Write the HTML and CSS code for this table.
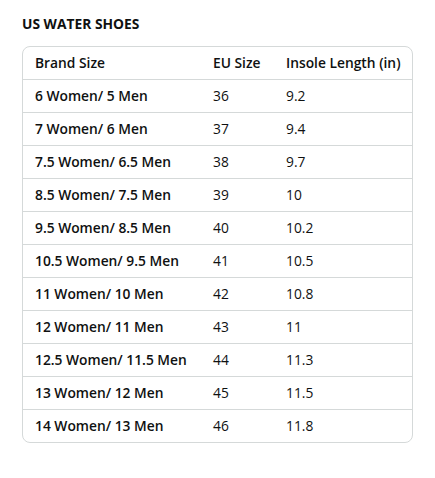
FILE: index.html
```html
<!DOCTYPE html>
<html>
<head>
<meta charset="utf-8">
<link rel="stylesheet" href="styles.css">
</head>
<body>
<div class="wrap">
  <h2 class="title">US WATER SHOES</h2>
  <div class="card">
    <table class="chart">
      <thead>
        <tr><th class="c1">Brand Size</th><th class="c2">EU Size</th><th class="c3">Insole Length (in)</th></tr>
      </thead>
      <tbody>
        <tr><th>6 Women/ 5 Men</th><td>36</td><td>9.2</td></tr>
        <tr><th>7 Women/ 6 Men</th><td>37</td><td>9.4</td></tr>
        <tr><th>7.5 Women/ 6.5 Men</th><td>38</td><td>9.7</td></tr>
        <tr><th>8.5 Women/ 7.5 Men</th><td>39</td><td>10</td></tr>
        <tr><th>9.5 Women/ 8.5 Men</th><td>40</td><td>10.2</td></tr>
        <tr><th>10.5 Women/ 9.5 Men</th><td>41</td><td>10.5</td></tr>
        <tr><th>11 Women/ 10 Men</th><td>42</td><td>10.8</td></tr>
        <tr><th>12 Women/ 11 Men</th><td>43</td><td>11</td></tr>
        <tr><th>12.5 Women/ 11.5 Men</th><td>44</td><td>11.3</td></tr>
        <tr><th>13 Women/ 12 Men</th><td>45</td><td>11.5</td></tr>
        <tr><th>14 Women/ 13 Men</th><td>46</td><td>11.8</td></tr>
      </tbody>
    </table>
  </div>
</div>
</body>
</html>
```
FILE: styles.css
```css
html, body {
  margin: 0;
  padding: 0;
  background: #ffffff;
}
body {
  font-family: "Open Sans", "Noto Sans", Arial, sans-serif;
  color: #0f1111;
  font-size: 13.8px;
}
.wrap {
  padding: 14px 22px 0 22px;
  width: 391px;
}
.title {
  margin: 0 0 12px 0;
  font-size: 13.8px;
  font-weight: 700;
  line-height: 20px;
  letter-spacing: 0;
}
.card {
  border: 1px solid #d5d9d9;
  border-radius: 8px;
  overflow: hidden;
}
.chart {
  width: 100%;
  border-collapse: collapse;
  table-layout: fixed;
}
.chart th, .chart td {
  height: 32px;
  padding: 0 0 0 12px;
  text-align: left;
  vertical-align: middle;
  font-size: 13.8px;
  line-height: 18px;
  white-space: nowrap;
}
.chart th {
  font-weight: 600;
}
.chart td {
  font-weight: 400;
}
.chart tbody tr th, .chart tbody tr td {
  border-top: 1px solid #d5d9d9;
}
.c1 { width: 166px; }
.c2 { width: 61px; }
.c3 { width: auto; }
```
